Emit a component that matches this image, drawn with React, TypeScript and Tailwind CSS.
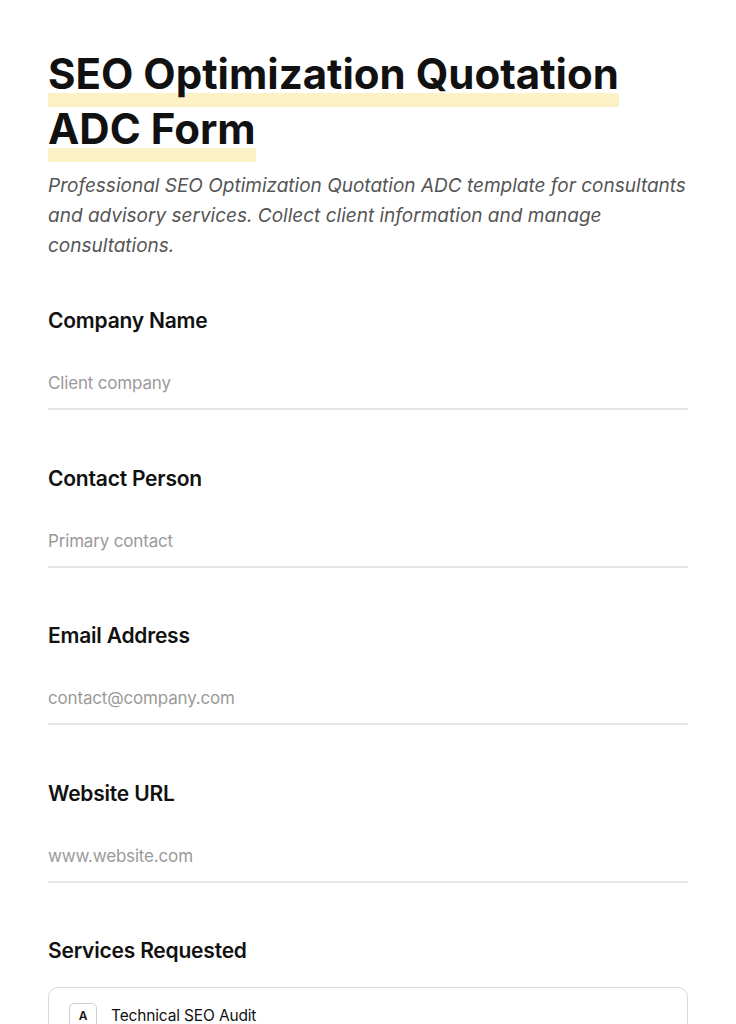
import React from 'react';

const fields = [
  { label: 'Company Name', placeholder: 'Client company', type: 'text' },
  { label: 'Contact Person', placeholder: 'Primary contact', type: 'text' },
  { label: 'Email Address', placeholder: 'contact@company.com', type: 'email' },
  { label: 'Website URL', placeholder: 'www.website.com', type: 'url' },
];

export default function App(): JSX.Element {
  return (
    <div className="min-h-screen bg-white font-['Inter',sans-serif] text-[#111]">
      <div className="mx-auto w-[640px] pt-[46px] pb-12">
        <h1 className="text-[42px] font-bold leading-[55px]">
          <span className="box-decoration-clone pb-[8px] bg-[linear-gradient(transparent_77%,#fdf1c6_77%)]">
            SEO Optimization Quotation ADC Form
          </span>
        </h1>
        <p className="mt-[15px] text-[19px] italic leading-[30px] text-[#555]">
          Professional SEO Optimization Quotation ADC template for consultants and advisory services. Collect client
          information and manage consultations.
        </p>

        <form className="mt-[46px] flex flex-col gap-[54.5px]">
          {fields.map((field) => (
            <div key={field.label} className="flex flex-col">
              <label className="text-[21px] font-semibold leading-[28px] tracking-[-0.01em]">{field.label}</label>
              <input
                type={field.type}
                placeholder={field.placeholder}
                className="mt-[23px] border-b-2 border-[#e6e6e6] py-[12px] text-[17px] leading-[26px] tracking-[-0.01em] outline-none placeholder:text-[#9a9a9a]"
              />
            </div>
          ))}

          <div className="flex flex-col">
            <label className="text-[21px] font-semibold leading-[28px] tracking-[-0.01em]">Services Requested</label>
            <div className="mt-[22px] rounded-[10px] border border-[#d9d9d9] px-[20px] py-[15px]">
              <div className="flex items-center gap-[14px]">
                <span className="flex h-[26px] w-[28px] items-center justify-center rounded-[5px] border border-[#cfcfcf] text-[12px] font-semibold">
                  A
                </span>
                <span className="text-[15.5px] tracking-[-0.01em]">Technical SEO Audit</span>
              </div>
            </div>
          </div>
        </form>
      </div>
    </div>
  );
}
